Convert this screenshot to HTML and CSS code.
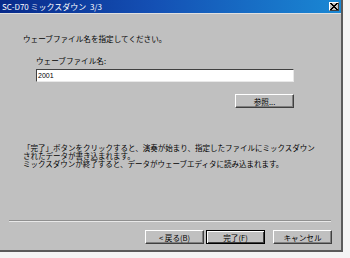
FILE: index.html
```html
<!DOCTYPE html>
<html>
<head>
<meta charset="utf-8">
<link rel="stylesheet" href="styles.css">
</head>
<body>
<div class="window">
  <div class="titlebar">
    <span class="title">SC-D70 ミックスダウン&nbsp;&nbsp;3/3</span>
    <span class="close">
      <svg width="8" height="7" viewBox="0 0 8 7"><path d="M0 0h2v1h1v1h2V1h1V0h2v1H7v1H6v1H5v1h1v1h1v1h1v1H6V6H5V5H3v1H2v1H0V6h1V5h1V4h1V3H2V2H1V1H0z" fill="#000"/></svg>
    </span>
  </div>
  <div class="body">
    <p class="intro">ウェーブファイル名を指定してください。</p>
    <div class="field">
      <div class="label">ウェーブファイル名:</div>
      <div class="input">2001</div>
      <div class="browse-row"><span class="btn browse">参照...</span></div>
    </div>
    <p class="note">「完了」ボタンをクリックすると、演奏が始まり、指定したファイルにミックスダウン<br>されたデータが書き込まれます。<br>ミックスダウンが終了すると、データがウェーブエディタに読み込まれます。</p>
    <div class="footer">
      <div class="sep"></div>
      <div class="buttons">
        <span class="btn">&lt; 戻る(B)</span>
        <span class="btn default">完了(F)</span>
        <span class="btn cancel">キャンセル</span>
      </div>
    </div>
  </div>
</div>
</body>
</html>
```
FILE: styles.css
```css
html, body {
  margin: 0;
  padding: 0;
  background: #f4f4f4;
}
body {
  width: 350px;
  height: 258px;
  overflow: hidden;
  font-family: "Noto Sans CJK JP", "Liberation Sans", sans-serif;
  font-size: 7.6px;
  color: #000;
}
.window {
  width: 341px;
  height: 250px;
  background: #c0c0c0;
  border-right: 2px solid #5a5a5a;
  border-bottom: 2px solid #5a5a5a;
  display: flex;
  flex-direction: column;
}
.titlebar {
  height: 13px;
  background: linear-gradient(to right, #082a8a, #1450b4 45%, #1a88d4);
  display: flex;
  align-items: center;
  justify-content: space-between;
  padding: 0 2px 0 2px;
  border-bottom: 1px solid #e0e0e0;
}
.title {
  color: #fff;
  font-size: 8px;
  line-height: 13px;
  white-space: nowrap;
}
.close {
  width: 10px;
  height: 9px;
  background: #c0c0c0;
  border: 1px solid;
  border-color: #fff #404040 #404040 #fff;
  box-sizing: border-box;
  display: flex;
  align-items: center;
  justify-content: center;
}
.close svg { display: block; }
.body {
  flex: 1;
  display: flex;
  flex-direction: column;
  padding: 0 9px 0 9px;
}
.intro {
  margin: 19px 0 0 14px;
  line-height: 11px;
  white-space: nowrap;
}
.field {
  margin: 11px 0 0 27px;
  width: 258px;
}
.label {
  line-height: 11px;
  white-space: nowrap;
}
.input {
  margin-top: 3px;
  height: 13px;
  box-sizing: border-box;
  background: #fff;
  border-top: 1px solid #404040;
  border-left: 1px solid #404040;
  border-right: 1px solid #e8e8e8;
  border-bottom: 1px solid #e8e8e8;
  font-family: "Liberation Sans", sans-serif;
  font-size: 7px;
  line-height: 11px;
  padding-left: 1px;
}
.browse-row {
  display: flex;
  justify-content: flex-end;
  margin-top: 12px;
}
.btn {
  height: 14px;
  box-sizing: border-box;
  background: #c0c0c0;
  border: 1px solid;
  border-color: #ffffff #404040 #404040 #ffffff;
  box-shadow: inset -1px -1px 0 #808080;
  display: flex;
  align-items: center;
  justify-content: center;
  white-space: nowrap;
}
.browse { width: 59px; }
.note {
  margin: 36px 0 0 14px;
  font-size: 7.5px;
  line-height: 8px;
  white-space: nowrap;
}
.footer {
  margin-top: auto;
  padding-bottom: 6px;
}
.sep {
  height: 0;
  border-top: 1px solid #909090;
  border-bottom: 1px solid #e8e8e8;
  margin: 0 1px 8px 0;
}
.buttons {
  display: flex;
  justify-content: flex-end;
  gap: 2px;
}
.buttons .btn { width: 59px; }
.buttons .default {
  border: 1px solid #000;
  box-shadow: inset 1px 1px 0 #fff, inset -1px -1px 0 #404040;
}
.buttons .cancel { margin-left: 6px; }
```
